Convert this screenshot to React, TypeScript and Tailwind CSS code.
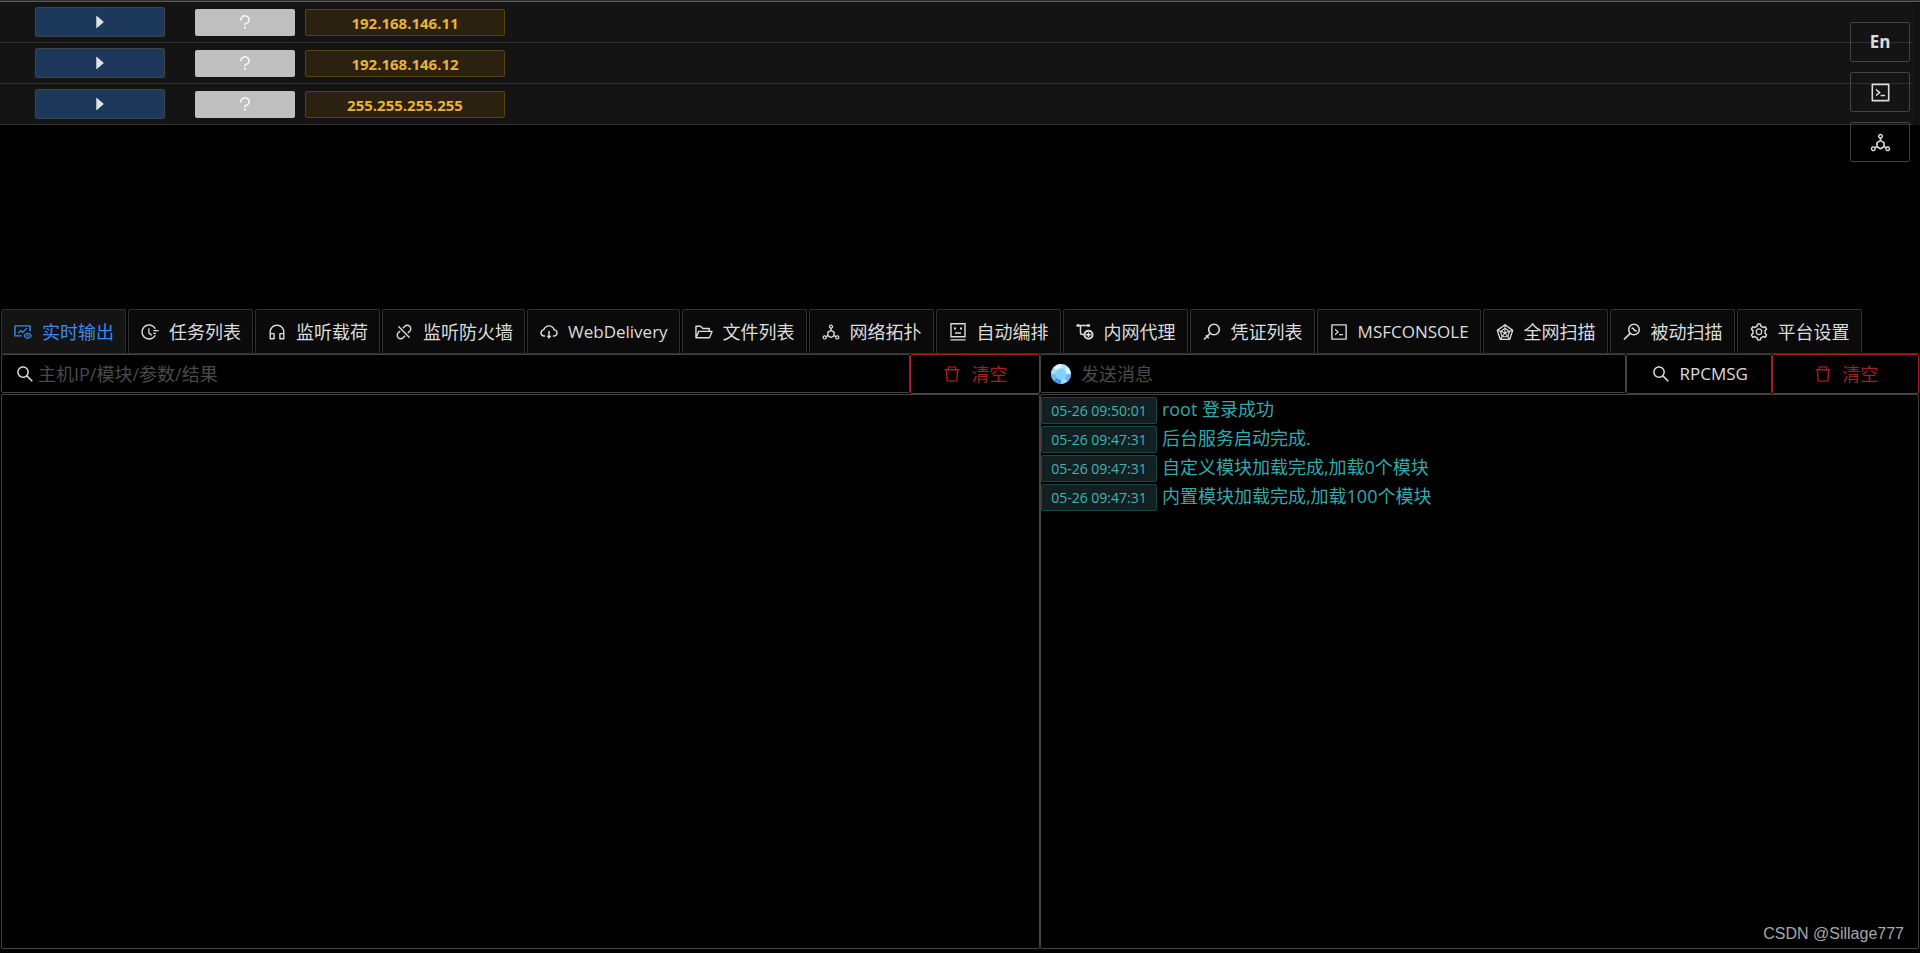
/**
 * Console page: host list on top, tool tabs, then the result and message panes.
 */
import type { ReactNode } from "react";
import type { IconType } from "react-icons";
import {
  AiFillCaretRight,
  AiOutlineCloudDownload,
  AiOutlineCode,
  AiOutlineCustomerService,
  AiOutlineDelete,
  AiOutlineDeploymentUnit,
  AiOutlineDisconnect,
  AiOutlineFieldTime,
  AiOutlineFolderOpen,
  AiOutlineFundView,
  AiOutlineQuestion,
  AiOutlineRadarChart,
  AiOutlineSearch,
  AiOutlineSetting,
} from "react-icons/ai";

// ─── Icons ────────────────────────────────────────────────────────────────────

function FaceIcon({ className }: { className?: string }) {
  return (
    <svg viewBox="-1 -1 20 20" className={className} fill="none" stroke="currentColor" strokeWidth="1.4" aria-hidden="true">
      <path d="M2 0.8h14v13H2zM1.5 16.9h15M6 10h6" />
      <path d="M5 5.5h2M11 5.5h2" strokeWidth="2" />
    </svg>
  );
}

function ProxyIcon({ className }: { className?: string }) {
  return (
    <svg viewBox="-1 -1 20 20" className={className} fill="none" stroke="currentColor" strokeWidth="1.5" aria-hidden="true">
      <path d="M1.500 2.500h11M4.500 2.500v7.500q0 1.500 1.500 1.500h2" />
      <path d="M1.500 2.500h1M12 2.500h1" strokeWidth="2.500" strokeLinecap="round" />
      <circle cx="12.500" cy="11.800" r="4" strokeWidth="2" />
      <path d="M12.500 9.500v4.600M10.200 11.800h4.600" strokeWidth="1.600" />
    </svg>
  );
}

function KeyIcon({ className }: { className?: string }) {
  return (
    <svg viewBox="-1 -1 20 20" className={className} fill="none" stroke="currentColor" strokeWidth="1.6" aria-hidden="true">
      <circle cx="11" cy="6.500" r="5.300" />
      <path d="M7.200 10.300L1 16.500M3 12.300l2.800 2.800" />
    </svg>
  );
}

function PassiveScanIcon({ className }: { className?: string }) {
  return (
    <svg viewBox="-1 -1 20 20" className={className} fill="none" stroke="currentColor" strokeWidth="1.5" aria-hidden="true">
      <circle cx="11" cy="6.500" r="5.300" />
      <path d="M7.200 10.300L1 16.500" strokeWidth="1.700" />
      <path d="M8.500 5.300h1.500l2 2.500h1.800" strokeWidth="1.500" />
    </svg>
  );
}

function GemIcon({ className }: { className?: string }) {
  return (
    <svg viewBox="0 0 20 20" className={className} aria-hidden="true">
      <circle cx="10" cy="10" r="10" fill="#7cc8fa" />
      <path d="M10 10L2.200 3.800A10 10 0 0 1 10 0z" fill="#e2f8ff" />
      <path d="M10 10V0a10 10 0 0 1 7 3z" fill="#b5e4fd" />
      <path d="M10 10l7-7a10 10 0 0 1 3 7z" fill="#e8fbff" />
      <path d="M10 10h10a10 10 0 0 1-3.500 7.600z" fill="#68b4f3" />
      <path d="M10 10l6.500 7.600A10 10 0 0 1 10 20z" fill="#a5dafb" />
      <path d="M10 10v10a10 10 0 0 1-7.500-3.400z" fill="#4796e3" />
      <path d="M10 10l-7.500 6.600A10 10 0 0 1 0 10z" fill="#6fb9f5" />
      <path d="M10 10H0a10 10 0 0 1 2.200-6.200z" fill="#a9defc" />
      <path d="M7.500 4.500h5l3 3.300v4.400l-3 3.300h-5l-3-3.300V7.800z" fill="#85d0ff" />
    </svg>
  );
}

// ─── Data ─────────────────────────────────────────────────────────────────────

const HOSTS = ["192.168.146.11", "192.168.146.12", "255.255.255.255"];

const TABS: { label: string; Icon: IconType | typeof FaceIcon; latin?: boolean }[] = [
  { label: "实时输出", Icon: AiOutlineFundView },
  { label: "任务列表", Icon: AiOutlineFieldTime },
  { label: "监听载荷", Icon: AiOutlineCustomerService },
  { label: "监听防火墙", Icon: AiOutlineDisconnect },
  { label: "WebDelivery", Icon: AiOutlineCloudDownload, latin: true },
  { label: "文件列表", Icon: AiOutlineFolderOpen },
  { label: "网络拓扑", Icon: AiOutlineDeploymentUnit },
  { label: "自动编排", Icon: FaceIcon },
  { label: "内网代理", Icon: ProxyIcon },
  { label: "凭证列表", Icon: KeyIcon },
  { label: "MSFCONSOLE", Icon: AiOutlineCode, latin: true },
  { label: "全网扫描", Icon: AiOutlineRadarChart },
  { label: "被动扫描", Icon: PassiveScanIcon },
  { label: "平台设置", Icon: AiOutlineSetting },
];

const MESSAGES = [
  { time: "05-26 09:50:01", text: "root 登录成功" },
  { time: "05-26 09:47:31", text: "后台服务启动完成." },
  { time: "05-26 09:47:31", text: "自定义模块加载完成,加载0个模块" },
  { time: "05-26 09:47:31", text: "内置模块加载完成,加载100个模块" },
];

// ─── Host list ────────────────────────────────────────────────────────────────

function HostRow({ ip }: { ip: string }) {
  return (
    <li className="flex items-center border-b border-[#303030] py-[5px] pl-[35px]">
      <button
        type="button"
        aria-label={`Open ${ip}`}
        className="mr-[30px] flex h-[30px] w-[130px] items-center justify-center rounded-xs border border-[#434343] bg-[#1c395b] text-[#dfe3e8]"
      >
        <AiFillCaretRight className="size-[18px]" />
      </button>
      <span className="mr-[10px] flex h-[27px] w-[100px] items-center justify-center rounded-xs bg-[#bfbfbf] text-white">
        <AiOutlineQuestion className="size-[18px]" />
      </span>
      <span className="mt-px flex h-[27px] w-[200px] items-center justify-center rounded-xs border border-[#594214] bg-[#2b2111] text-[15px] leading-5 font-bold text-[#e8b339]">
        {ip}
      </span>
    </li>
  );
}

function FloatButton({ label, children }: { label: string; children: ReactNode }) {
  return (
    <button
      type="button"
      aria-label={label}
      className="flex h-10 w-[60px] items-center justify-center rounded-xs border border-[#434343] text-[17px] font-bold text-[#dcdcdc]"
    >
      {children}
    </button>
  );
}

function HostList() {
  return (
    <section className="relative h-[308px] border-t border-[#5a5a5a]">
      <div className="flex bg-[#121212]">
        <ul className="flex-1 bg-[#141414]">
          {HOSTS.map((ip) => (
            <HostRow key={ip} ip={ip} />
          ))}
        </ul>
        <div className="w-[7px]" />
      </div>
      <div className="absolute top-5 right-[10px] flex flex-col gap-[10px]">
        <FloatButton label="En">En</FloatButton>
        <FloatButton label="Console">
          <AiOutlineCode className="size-[23px]" />
        </FloatButton>
        <FloatButton label="Topology">
          <AiOutlineDeploymentUnit className="size-[23px]" />
        </FloatButton>
      </div>
    </section>
  );
}

// ─── Tabs ─────────────────────────────────────────────────────────────────────

function TabBar() {
  return (
    <div role="tablist" className="flex gap-[2px] border-b border-[#303030]">
      {TABS.map(({ label, Icon, latin }, i) => (
        <button
          key={label}
          type="button"
          role="tab"
          aria-selected={i === 0}
          className="flex h-11 items-center gap-[9px] rounded-t-xs border border-b-0 border-[#303030] bg-[#0a0a0a] px-[11px] whitespace-nowrap text-[#dcdcdc] aria-selected:bg-[#141414] aria-selected:text-[#3c89f0]"
        >
          <Icon className="size-5 shrink-0" />
          <span className={latin ? "text-[17px]" : undefined}>{label}</span>
        </button>
      ))}
    </div>
  );
}

// ─── Panes ────────────────────────────────────────────────────────────────────

function SearchField({ placeholder, icon }: { placeholder: string; icon: ReactNode }) {
  return (
    <label className="flex h-[39px] min-w-0 items-center rounded-xs border border-[#434343] pr-3 pl-[10px] text-[#dcdcdc]">
      {icon}
      <input
        type="text"
        aria-label={placeholder}
        placeholder={placeholder}
        className="min-w-0 flex-1 bg-transparent outline-none placeholder:text-[#4a4a4a]"
      />
    </label>
  );
}

function ClearButton() {
  return (
    <button
      type="button"
      className="flex h-10 items-center justify-center gap-[9px] rounded-xs border border-[#a61d24] text-[#a61d24]"
    >
      <AiOutlineDelete className="size-5" />
      清空
    </button>
  );
}

function ResultPane() {
  return (
    <section className="flex flex-col">
      <div className="grid grid-cols-[7fr_1fr] items-start">
        <SearchField
          placeholder="主机IP/模块/参数/结果"
          icon={<AiOutlineSearch className="mx-[3px] size-5 shrink-0" />}
        />
        <ClearButton />
      </div>
      <div className="flex-1 rounded-xs border border-[#434343]" />
    </section>
  );
}

function MessagePane() {
  return (
    <section className="flex flex-col">
      <div className="grid grid-cols-[4fr_1fr_1fr] items-start">
        <SearchField placeholder="发送消息" icon={<GemIcon className="mr-[10px] size-5 shrink-0" />} />
        <button
          type="button"
          className="flex h-10 items-center justify-center gap-[9px] rounded-xs border border-[#434343] text-[17px] text-[#dcdcdc]"
        >
          <AiOutlineSearch className="size-5" />
          RPCMSG
        </button>
        <ClearButton />
      </div>
      <ul className="flex flex-1 flex-col gap-[2px] rounded-xs border border-[#434343] pt-[2px]">
        {MESSAGES.map((m) => (
          <li key={m.text} className="flex items-start gap-[5px] text-[#33a9ab]">
            <time className="flex h-[27px] w-[116px] items-center justify-center rounded-xs border border-[#144848] bg-[#132022] text-sm text-[#40b5b3]">
              {m.time}
            </time>
            {m.text}
          </li>
        ))}
      </ul>
    </section>
  );
}

// ─── Page ─────────────────────────────────────────────────────────────────────

export default function App() {
  return (
    <div className="relative flex min-h-screen flex-col border-t border-[#303030] bg-black pb-1 font-['Open_Sans','Noto_Sans_CJK_SC',sans-serif] text-[18px] leading-6">
      <HostList />
      <main className="flex flex-1 flex-col px-px">
        <TabBar />
        <div className="grid flex-1 grid-cols-[13fr_11fr]">
          <ResultPane />
          <MessagePane />
        </div>
      </main>
      <footer className="absolute right-4 bottom-[7px] font-['Liberation_Sans',sans-serif] text-base text-[#a8a8a8]">
        CSDN @Sillage777
      </footer>
    </div>
  );
}
